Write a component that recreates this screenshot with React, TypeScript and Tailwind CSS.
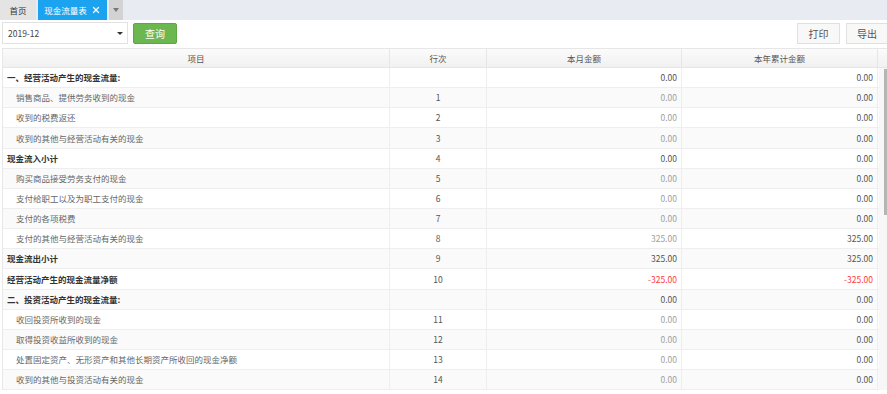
import { X } from 'lucide-react';

type Row = {
    name: string;
    no?: string;
    month: string;
    year: string;
    kind: 'head' | 'item' | 'total';
};

const rows: Row[] = [
    { name: '一、经营活动产生的现金流量:', month: '0.00', year: '0.00', kind: 'head' },
    { name: '销售商品、提供劳务收到的现金', no: '1', month: '0.00', year: '0.00', kind: 'item' },
    { name: '收到的税费返还', no: '2', month: '0.00', year: '0.00', kind: 'item' },
    { name: '收到的其他与经营活动有关的现金', no: '3', month: '0.00', year: '0.00', kind: 'item' },
    { name: '现金流入小计', no: '4', month: '0.00', year: '0.00', kind: 'total' },
    { name: '购买商品接受劳务支付的现金', no: '5', month: '0.00', year: '0.00', kind: 'item' },
    { name: '支付给职工以及为职工支付的现金', no: '6', month: '0.00', year: '0.00', kind: 'item' },
    { name: '支付的各项税费', no: '7', month: '0.00', year: '0.00', kind: 'item' },
    { name: '支付的其他与经营活动有关的现金', no: '8', month: '325.00', year: '325.00', kind: 'item' },
    { name: '现金流出小计', no: '9', month: '325.00', year: '325.00', kind: 'total' },
    { name: '经营活动产生的现金流量净额', no: '10', month: '-325.00', year: '-325.00', kind: 'total' },
    { name: '二、投资活动产生的现金流量:', month: '0.00', year: '0.00', kind: 'head' },
    { name: '收回投资所收到的现金', no: '11', month: '0.00', year: '0.00', kind: 'item' },
    { name: '取得投资收益所收到的现金', no: '12', month: '0.00', year: '0.00', kind: 'item' },
    { name: '处置固定资产、无形资产和其他长期资产所收回的现金净额', no: '13', month: '0.00', year: '0.00', kind: 'item' },
    { name: '收到的其他与投资活动有关的现金', no: '14', month: '0.00', year: '0.00', kind: 'item' },
];

const amountColor = (value: string, muted: boolean) => {
    if (value.startsWith('-')) return 'text-[#ff3b3b]';
    return muted ? 'text-[#a0a0a0]' : 'text-[#555]';
};

export default function App() {
    return (
        <div
            className="h-[394px] w-[887px] overflow-hidden bg-white text-[8.5px] text-[#555]"
            style={{ fontFamily: '"Noto Sans CJK SC", "Noto Sans", sans-serif' }}
        >
            {/* 标签栏 */}
            <div className="flex h-[20px] items-stretch bg-[#e9ebf3]">
                <div className="flex w-[36px] items-center justify-center bg-[#e4e4e4] text-[#333]">首页</div>
                <div className="ml-[2px] flex w-[69px] items-center justify-center gap-[4px] bg-[#1ca3f0] text-white">
                    <span>现金流量表</span>
                    <X size={10} strokeWidth={3} />
                </div>
                <div className="ml-[2px] flex w-[14px] items-center justify-center bg-[#d3d3d3]">
                    <span className="h-0 w-0 border-x-[3px] border-t-[4px] border-x-transparent border-t-[#777]" />
                </div>
            </div>

            {/* 工具栏 */}
            <div className="flex h-[28px] items-start pt-[2px]">
                <div className="ml-[2px] flex h-[22px] w-[126px] items-center justify-between border border-[#e2e2e2] bg-white pl-[5px] pr-[4px] text-[#444]">
                    <span>2019-12</span>
                    <span className="h-0 w-0 border-x-[3px] border-t-[3px] border-x-transparent border-t-[#333]" />
                </div>
                <button className="ml-[5px] mt-[1px] flex h-[21px] w-[44px] items-center justify-center rounded-[2px] border border-[#5fa643] bg-[#6cb750] text-[10px] text-white">
                    查询
                </button>
                <div className="flex-1" />
                <button className="mt-[1px] flex h-[21px] w-[43px] items-center justify-center border border-[#e0e0e0] bg-[#f8f8f8] text-[10px] text-[#555]">
                    打印
                </button>
                <button className="ml-[6px] mt-[1px] flex h-[21px] w-[41px] items-center justify-center border border-[#e0e0e0] border-r-0 bg-[#f8f8f8] text-[10px] text-[#555]">
                    导出
                </button>
            </div>

            {/* 表格 */}
            <div className="ml-[2px] border-l border-[#e8e8e8]">
                <div className="flex h-[20px] border-y border-[#e6e6e6] bg-gradient-to-b from-[#fbfbfb] to-[#f1f1f1] text-[#555]">
                    <div className="flex w-[387px] items-center justify-center border-r border-[#e6e6e6]">项目</div>
                    <div className="flex w-[97px] items-center justify-center border-r border-[#e6e6e6]">行次</div>
                    <div className="flex w-[195px] items-center justify-center border-r border-[#e6e6e6]">本月金额</div>
                    <div className="flex w-[196px] items-center justify-center border-r border-[#e6e6e6]">本年累计金额</div>
                    <div className="flex-1" />
                </div>
                <div className="flex">
                    <div className="w-[876px]">
                        {rows.map((row, i) => {
                            const bold = row.kind !== 'item';
                            return (
                                <div
                                    key={i}
                                    className={`flex h-[20.15px] border-b border-[#eeeeee] ${i % 2 === 1 ? 'bg-[#fafafa]' : 'bg-white'}`}
                                >
                                    <div
                                        className={`flex w-[387px] items-center border-r border-[#eeeeee] ${
                                            bold ? 'pl-[4px] font-bold text-[#333]' : 'pl-[13px] text-[#666]'
                                        }`}
                                    >
                                        {row.name}
                                    </div>
                                    <div className="flex w-[97px] items-center justify-center border-r border-[#eeeeee] text-[#555]">
                                        {row.no}
                                    </div>
                                    <div
                                        className={`flex w-[195px] items-center justify-end border-r border-[#eeeeee] pr-[4px] ${amountColor(
                                            row.month,
                                            row.kind === 'item'
                                        )}`}
                                    >
                                        {row.month}
                                    </div>
                                    <div
                                        className={`flex w-[196px] items-center justify-end border-r border-[#eeeeee] pr-[4px] ${amountColor(
                                            row.year,
                                            false
                                        )}`}
                                    >
                                        {row.year}
                                    </div>
                                </div>
                            );
                        })}
                    </div>
                    <div className="flex flex-1 justify-end bg-[#f7f7f7]">
                        <div className="mt-[1px] h-[146px] w-[3px] bg-[#b5b5b5]" />
                    </div>
                </div>
            </div>
        </div>
    );
}
